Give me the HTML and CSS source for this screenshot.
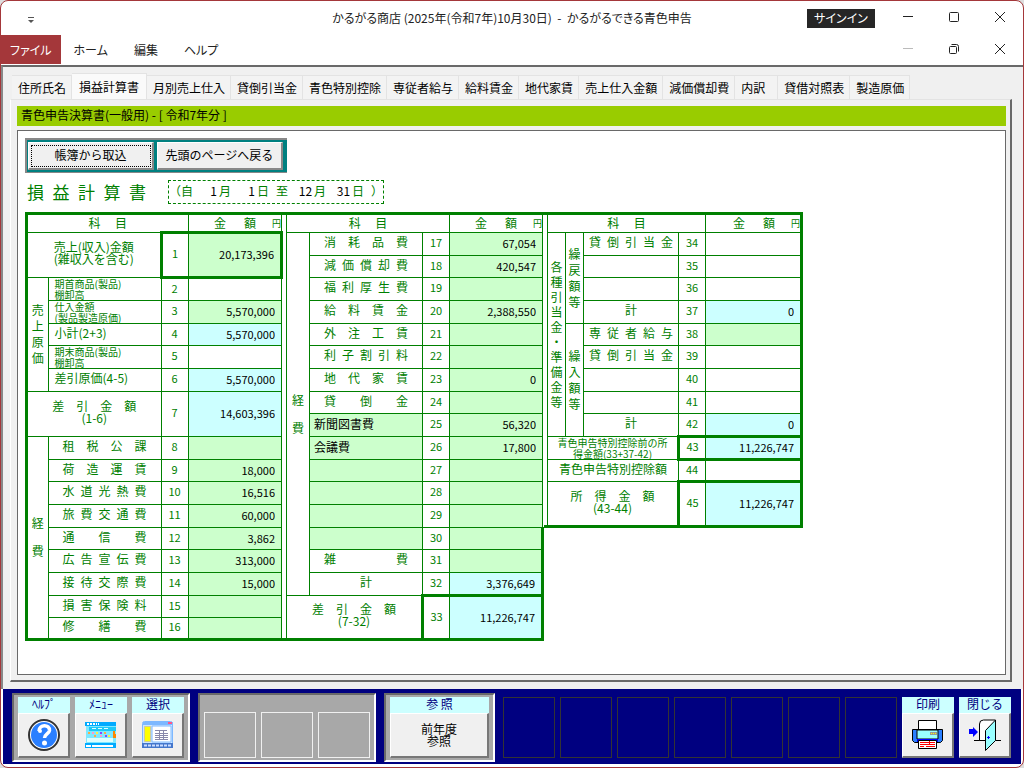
FILE: index.html
```html
<!DOCTYPE html>
<html lang="ja">
<head>
  <meta charset="UTF-8" />
  <meta name="viewport" content="width=device-width, initial-scale=1.0"/>
  <title>かるがるできる青色申告</title>
  <link rel="stylesheet" href="styles.css">
</head>
<body>
  <div class="window">
    <header class="titlebar">
      <div class="quick">
        <svg width="8" height="6" viewBox="0 0 8 6"><path d="M1 0.5h6" stroke="#555"/><path d="M1 3h6L4 6z" fill="#555"/></svg>
      </div>
      <h1>かるがる商店 (2025年(令和7年)10月30日) &nbsp;-&nbsp; かるがるできる青色申告</h1>
      <div class="controls">
        <button class="signin">サインイン</button>
        <button class="ctl"><svg width="12" height="12"><path d="M1 4.5h10" stroke="#222"/></svg></button>
        <button class="ctl"><svg width="12" height="12"><rect x="1.5" y="0.5" width="9" height="9" rx="1" fill="none" stroke="#222"/></svg></button>
        <button class="ctl"><svg width="12" height="12"><path d="M1 0l10 10M11 0L1 10" stroke="#222"/></svg></button>
      </div>
    </header>

    <nav class="menubar">
      <a class="file" href="#file">ファイル</a>
      <a href="#home">ホーム</a>
      <a href="#edit">編集</a>
      <a href="#help">ヘルプ</a>
      <div class="controls">
        <button class="ctl"><svg width="12" height="12"><path d="M1 4.5h10" stroke="#bbb"/></svg></button>
        <button class="ctl"><svg width="12" height="12"><rect x="1.5" y="2.5" width="7" height="7" rx="1" fill="none" stroke="#222"/><path d="M3.5 0.5h5a2 2 0 0 1 2 2v5" fill="none" stroke="#222"/></svg></button>
        <button class="ctl"><svg width="12" height="12"><path d="M1 0l10 10M11 0L1 10" stroke="#222"/></svg></button>
      </div>
    </nav>

    <main class="form">
      <div class="tabs">
        <button>住所氏名</button>
        <button class="active">損益計算書</button>
        <button>月別売上仕入</button>
        <button>貸倒引当金</button>
        <button>青色特別控除</button>
        <button>専従者給与</button>
        <button>給料賃金</button>
        <button>地代家賃</button>
        <button>売上仕入金額</button>
        <button>減価償却費</button>
        <button class="short">内訳</button>
        <button>貸借対照表</button>
        <button>製造原価</button>
      </div>

      <div class="page">
        <h2 class="caption">青色申告決算書(一般用) - [ 令和7年分 ]</h2>

        <section class="paper">
          <div class="actions">
            <button class="focused">帳簿から取込</button>
            <button>先頭のページへ戻る</button>
          </div>

          <div class="heading">
            <h3>損&ensp;益&ensp;計&ensp;算&ensp;書</h3>
            <div class="period">
              <span>（自</span>
              <label><input type="text" value="1">月</label>
              <label><input type="text" value="1">日</label>
              <span>至</span>
              <label><input type="text" value="12">月</label>
              <label><input type="text" value="31">日</label>
              <span>）</span>
            </div>
          </div>

          <div class="sheet">
            <div class="left">
              <!-- 売上・売上原価・経費 1-16 -->
              <table class="sales">
                <colgroup><col class="c-first"><col class="c-name"><col class="c-no"><col class="c-amt"></colgroup>
                <thead>
                  <tr><th colspan="3">科　 目</th><th><div class="yen"><span>金　&ensp;額</span><small>円</small></div></th></tr>
                </thead>
                <tbody>
                  <tr><th colspan="2" rowspan="2">売上(収入)金額<br>(雑収入を含む)</th><td class="no strong-l" rowspan="2"><label for="v1">1</label></td><td class="amt in strong-r" rowspan="2"><input id="v1" type="text" value="20,173,396"></td></tr>
                  <tr></tr>
                  <tr><th class="side" rowspan="5">売<br>上<br>原<br>価</th><th class="small">期首商品(製品)<br>棚卸高</th><td class="no"><label for="v2">2</label></td><td class="amt"><input id="v2" type="text"></td></tr>
                  <tr><th class="small">仕入金額<br>(製品製造原価)</th><td class="no"><label for="v3">3</label></td><td class="amt in"><input id="v3" type="text" value="5,570,000"></td></tr>
                  <tr><th class="start">小計(2+3)</th><td class="no"><label for="v4">4</label></td><td class="amt calc"><input id="v4" type="text" value="5,570,000" readonly></td></tr>
                  <tr><th class="small">期末商品(製品)<br>棚卸高</th><td class="no"><label for="v5">5</label></td><td class="amt"><input id="v5" type="text"></td></tr>
                  <tr><th class="start">差引原価(4-5)</th><td class="no"><label for="v6">6</label></td><td class="amt calc"><input id="v6" type="text" value="5,570,000" readonly></td></tr>
                  <tr><th colspan="2" rowspan="2">差　引　金　額<br>(1-6)</th><td class="no" rowspan="2"><label for="v7">7</label></td><td class="amt calc" rowspan="2"><input id="v7" type="text" value="14,603,396" readonly></td></tr>
                  <tr></tr>
                  <tr><th class="side wide bottom" rowspan="9">経<br><br>費</th><th>租　税　公　課</th><td class="no"><label for="v8">8</label></td><td class="amt in"><input id="v8" type="text"></td></tr>
                  <tr><th>荷　造　運　賃</th><td class="no"><label for="v9">9</label></td><td class="amt in"><input id="v9" type="text" value="18,000"></td></tr>
                  <tr><th>水&ensp;道&ensp;光&ensp;熱&ensp;費</th><td class="no"><label for="v10">10</label></td><td class="amt in"><input id="v10" type="text" value="16,516"></td></tr>
                  <tr><th>旅&ensp;費&ensp;交&ensp;通&ensp;費</th><td class="no"><label for="v11">11</label></td><td class="amt in"><input id="v11" type="text" value="60,000"></td></tr>
                  <tr><th>通　　信　　費</th><td class="no"><label for="v12">12</label></td><td class="amt in"><input id="v12" type="text" value="3,862"></td></tr>
                  <tr><th>広&ensp;告&ensp;宣&ensp;伝&ensp;費</th><td class="no"><label for="v13">13</label></td><td class="amt in"><input id="v13" type="text" value="313,000"></td></tr>
                  <tr><th>接&ensp;待&ensp;交&ensp;際&ensp;費</th><td class="no"><label for="v14">14</label></td><td class="amt in"><input id="v14" type="text" value="15,000"></td></tr>
                  <tr><th>損&ensp;害&ensp;保&ensp;険&ensp;料</th><td class="no"><label for="v15">15</label></td><td class="amt in"><input id="v15" type="text"></td></tr>
                  <tr><th class="bottom">修　　繕　　費</th><td class="no bottom"><label for="v16">16</label></td><td class="amt in bottom"><input id="v16" type="text"></td></tr>
                </tbody>
              </table>

              <!-- 経費 17-33 -->
              <table>
                <colgroup><col class="c-side"><col class="c-name"><col class="c-no"><col class="c-amt"></colgroup>
                <thead>
                  <tr><th colspan="3">科　 目</th><th><div class="yen"><span>金　&ensp;額</span><small>円</small></div></th></tr>
                </thead>
                <tbody>
                  <tr><th class="side wide" rowspan="16">経<br><br>費</th><th>消　耗　品　費</th><td class="no"><label for="v17">17</label></td><td class="amt in"><input id="v17" type="text" value="67,054"></td></tr>
                  <tr><th>減&ensp;価&ensp;償&ensp;却&ensp;費</th><td class="no"><label for="v18">18</label></td><td class="amt in"><input id="v18" type="text" value="420,547"></td></tr>
                  <tr><th>福&ensp;利&ensp;厚&ensp;生&ensp;費</th><td class="no"><label for="v19">19</label></td><td class="amt in"><input id="v19" type="text"></td></tr>
                  <tr><th>給　料　賃　金</th><td class="no"><label for="v20">20</label></td><td class="amt in"><input id="v20" type="text" value="2,388,550"></td></tr>
                  <tr><th>外　注　工　賃</th><td class="no"><label for="v21">21</label></td><td class="amt in"><input id="v21" type="text"></td></tr>
                  <tr><th>利&ensp;子&ensp;割&ensp;引&ensp;料</th><td class="no"><label for="v22">22</label></td><td class="amt in"><input id="v22" type="text"></td></tr>
                  <tr><th>地　代　家　賃</th><td class="no"><label for="v23">23</label></td><td class="amt in"><input id="v23" type="text" value="0"></td></tr>
                  <tr><th>貸　　倒　　金</th><td class="no"><label for="v24">24</label></td><td class="amt in"><input id="v24" type="text"></td></tr>
                  <tr><td class="in"><input class="name" type="text" value="新聞図書費" aria-labelledby="n25"></td><td class="no"><label id="n25" for="v25">25</label></td><td class="amt in"><input id="v25" type="text" value="56,320"></td></tr>
                  <tr><td class="in"><input class="name" type="text" value="会議費" aria-labelledby="n26"></td><td class="no"><label id="n26" for="v26">26</label></td><td class="amt in"><input id="v26" type="text" value="17,800"></td></tr>
                  <tr><td class="in"><input class="name" type="text" aria-labelledby="n27"></td><td class="no"><label id="n27" for="v27">27</label></td><td class="amt in"><input id="v27" type="text"></td></tr>
                  <tr><td class="in"><input class="name" type="text" aria-labelledby="n28"></td><td class="no"><label id="n28" for="v28">28</label></td><td class="amt in"><input id="v28" type="text"></td></tr>
                  <tr><td class="in"><input class="name" type="text" aria-labelledby="n29"></td><td class="no"><label id="n29" for="v29">29</label></td><td class="amt in"><input id="v29" type="text"></td></tr>
                  <tr><td class="in"><input class="name" type="text" aria-labelledby="n30"></td><td class="no"><label id="n30" for="v30">30</label></td><td class="amt in edge"><input id="v30" type="text"></td></tr>
                  <tr><th>雑　　　　　費</th><td class="no"><label for="v31">31</label></td><td class="amt in edge"><input id="v31" type="text"></td></tr>
                  <tr><th>計</th><td class="no"><label for="v32">32</label></td><td class="amt calc edge"><input id="v32" type="text" value="3,376,649" readonly></td></tr>
                  <tr><th class="bottom" colspan="2" rowspan="2">差　引　金　額<br>(7-32)</th><td class="no strong-l bottom" rowspan="2"><label for="v33">33</label></td><td class="amt calc strong-r bottom" rowspan="2"><input id="v33" type="text" value="11,226,747" readonly></td></tr>
                  <tr></tr>
                </tbody>
              </table>
            </div>

            <div class="right">
              <!-- 引当金・準備金・所得金額 34-45 -->
              <table class="reserve">
                <colgroup><col class="c-thin"><col class="c-thin"><col class="c-item"><col class="c-no"><col class="c-amt"></colgroup>
                <thead>
                  <tr><th colspan="4">科　 目</th><th><div class="yen"><span>金　&ensp;額</span><small>円</small></div></th></tr>
                </thead>
                <tbody>
                  <tr><th class="side tight" rowspan="9">各<br>種<br>引<br>当<br>金<br>・<br>準<br>備<br>金<br>等</th><th class="side" rowspan="4">繰<br>戻<br>額<br>等</th><th>貸&ensp;倒&ensp;引&ensp;当&ensp;金</th><td class="no"><label for="v34">34</label></td><td class="amt"><input id="v34" type="text"></td></tr>
                  <tr><td><input class="name" type="text" aria-labelledby="n35"></td><td class="no"><label id="n35" for="v35">35</label></td><td class="amt"><input id="v35" type="text"></td></tr>
                  <tr><td><input class="name" type="text" aria-labelledby="n36"></td><td class="no"><label id="n36" for="v36">36</label></td><td class="amt"><input id="v36" type="text"></td></tr>
                  <tr><th>計</th><td class="no"><label for="v37">37</label></td><td class="amt calc"><input id="v37" type="text" value="0" readonly></td></tr>
                  <tr><th class="side" rowspan="5">繰<br>入<br>額<br>等</th><th>専&ensp;従&ensp;者&ensp;給&ensp;与</th><td class="no"><label for="v38">38</label></td><td class="amt in"><input id="v38" type="text"></td></tr>
                  <tr><th>貸&ensp;倒&ensp;引&ensp;当&ensp;金</th><td class="no"><label for="v39">39</label></td><td class="amt"><input id="v39" type="text"></td></tr>
                  <tr><td><input class="name" type="text" aria-labelledby="n40"></td><td class="no"><label id="n40" for="v40">40</label></td><td class="amt"><input id="v40" type="text"></td></tr>
                  <tr><td><input class="name" type="text" aria-labelledby="n41"></td><td class="no"><label id="n41" for="v41">41</label></td><td class="amt"><input id="v41" type="text"></td></tr>
                  <tr><th>計</th><td class="no"><label for="v42">42</label></td><td class="amt calc"><input id="v42" type="text" value="0" readonly></td></tr>
                  <tr><th class="small mid" colspan="3">青色申告特別控除前の所<br>得金額(33+37-42)</th><td class="no strong-l"><label for="v43">43</label></td><td class="amt calc strong-r"><input id="v43" type="text" value="11,226,747" readonly></td></tr>
                  <tr><th colspan="3">青色申告特別控除額</th><td class="no"><label for="v44">44</label></td><td class="amt"><input id="v44" type="text"></td></tr>
                  <tr><th class="bottom" colspan="3" rowspan="2">所　得　金　額<br>(43-44)</th><td class="no strong-l bottom" rowspan="2"><label for="v45">45</label></td><td class="amt calc strong-r bottom" rowspan="2"><input id="v45" type="text" value="11,226,747" readonly></td></tr>
                  <tr></tr>
                </tbody>
              </table>
            </div>
          </div>
        </section>
      </div>
    </main>

    <footer class="dock">
      <div class="group">
        <button class="tool"><span class="cap">ﾍﾙﾌﾟ</span><span class="face">
          <svg width="32" height="32" viewBox="0 0 32 32"><circle cx="16" cy="16" r="15" fill="#fff" stroke="#333" stroke-width="2"/><circle cx="16" cy="16" r="13" fill="#2a7fff"/><path d="M11 12c0-7 11-7 10.500-.5C21 15 16.500 15 16.500 19" fill="none" stroke="#fff" stroke-width="3.500"/><circle cx="12" cy="12" r="2" fill="#fff"/><circle cx="16.500" cy="24" r="2.500" fill="#fff"/></svg>
        </span></button>
        <button class="tool"><span class="cap">ﾒﾆｭｰ</span><span class="face">
          <svg width="32" height="26" viewBox="0 0 32 26" shape-rendering="crispEdges"><path fill="#0af" d="M0 0h31v4H0z"/><path fill="#fff" d="M2 1h2v2H2zM5 1h2v2H5zM8 1h2v2H8zM11 1h1v2h-1zM13 1h1v2h-1z"/><path fill="#7de8ff" d="M1 4h30v18H1z"/><path fill="#1cc8f8" d="M4 5h27v4H4z"/><path fill="#dff" d="M2 16h26v4H2zM7 6h4v1H7zM13 6h4v1h-4zM19 6h4v1h-4z"/><path fill="#fa4" d="M3 10h2v2H3zM9 13h2v2H9zM19 10h2v2h-2z"/><path fill="#f9c" d="M7 10h2v2H7zM15 13h2v2h-2z"/><path fill="#fe4" d="M11 10h2v2h-2zM23 13h2v2h-2z"/><path fill="#84f" d="M15 10h2v2h-2zM20 13h2v2h-2z"/><path fill="#f80" d="M28 9h2v3h1v4h-3z"/><path fill="#0af" d="M0 21h31v5H0z"/><path fill="#fff" d="M1 23h5v2H1zM7 23h21v2H7z"/></svg>
        </span></button>
        <button class="tool"><span class="cap">選択</span><span class="face">
          <svg width="32" height="28" viewBox="0 0 32 28"><rect x="0.500" y="0.500" width="30" height="26" rx="2" fill="#cfe6ff" stroke="#7db8ff"/><path fill="#7db8ff" d="M1 1h30v3H1z"/><path fill="#f58" d="M26 1h4v2h-4z"/><path fill="#fff" d="M10 5h19v16H10z" stroke="#7db8ff"/><path fill="#ff0" stroke="#cc9" d="M2.500 5.500h6v15h-6z"/><path fill="none" stroke="#88a" d="M13 9.500h12M13 12.500h13M13 14.500h13M13 16.500h13M13 18.500h13M17.500 9v10M21.500 9v10"/><path fill="#47c" d="M0 22h31v5H0z"/><path stroke="#cdf" stroke-width="2" stroke-dasharray="3 1" d="M2 24.500h27"/></svg>
        </span></button>
      </div>

      <div class="group low">
        <span class="blank"></span>
        <span class="blank"></span>
        <span class="blank"></span>
      </div>

      <div class="group">
        <button class="tool big"><span class="cap">参 照</span><span class="face">前年度<br>参照</span></button>
      </div>

      <div class="slots">
        <span class="slot"></span>
        <span class="slot"></span>
        <span class="slot"></span>
        <span class="slot"></span>
        <span class="slot"></span>
        <span class="slot"></span>
        <span class="slot"></span>
        <button class="tool"><span class="cap">印刷</span><span class="face">
          <svg width="32" height="30" viewBox="0 0 32 30"><path d="M6.500.500h18v11h-18z" fill="#fff" stroke="#000"/><path d="M.500 9.500h30v11l-2 2h-26l-2-2z" fill="#2a7fff" stroke="#000"/><path d="M5 10h21v9H5z" fill="#9ff" stroke="#000"/><path d="M18 12h7v3h-7z" fill="#999"/><path d="M19 13.500h5" stroke="#ff0" stroke-dasharray="1 1"/><path d="M5 19h21v3H5z" fill="#00f"/><path d="M6.500 20.500h18v8h-18z" fill="#fff" stroke="#000"/><path d="M8 22.500h15M8 24.500h15M8 26.500h4M14 26.500h9M17.500 21v4" stroke="#f00"/></svg>
        </span></button>
        <button class="tool"><span class="cap">閉じる</span><span class="face">
          <svg width="32" height="32" viewBox="0 0 32 32"><path d="M5 21.500h27" stroke="#000"/><path d="M10.500 21.500V5q0-4 4-4h12v20.500z" fill="#fff" stroke="#000"/><path d="M16.500 11.500l10-10.500 0 20.500-10 10z" fill="#9ff" stroke="#000"/><path d="M18 18.500h3M19.500 17v3" stroke="#00f"/><path d="M0 10h4V8l5 5-5 5v-3H0z" fill="#00f"/></svg>
        </span></button>
      </div>
    </footer>
  </div>
</body>
</html>
```
FILE: styles.css
```css
* {
  box-sizing: border-box;
}
body {
  margin: 0;
  background-color: #ddd;
  color: black;
  font-family: "Noto Sans CJK JP", sans-serif;
  font-size: 12px;
  line-height: 14px;
}
button, input {
  font: inherit;
  color: inherit;
  margin: 0;
  padding: 0;
  border: none;
  background: none;
}
h1, h2, h3 {
  margin: 0;
  font-size: 12px;
  font-weight: normal;
}
.window {
  display: flex;
  flex-direction: column;
  min-height: 100vh;
  background-color: white;
  border: 1px solid #a4373a;
  border-radius: 8px;
  overflow: hidden;
}

/* title bar and menu */
.titlebar {
  display: grid;
  grid-template-columns: 1fr auto 1fr;
  align-items: center;
  height: 34px;
}
.titlebar h1 {
  font-feature-settings: "palt";
  color: #222;
}
.quick {
  padding-left: 26px;
}
.controls {
  display: flex;
  align-items: center;
  justify-content: flex-end;
  margin-left: auto;
}
.ctl {
  display: flex;
  align-items: center;
  justify-content: center;
  width: 46px;
  height: 28px;
}
.signin {
  width: 68px;
  height: 19px;
  margin-right: 10px;
  background-color: #262626;
  color: white;
  font-feature-settings: "palt";
}
.menubar {
  display: flex;
  align-items: center;
  height: 30px;
  padding-bottom: 1px;
  font-feature-settings: "palt";
}
.menubar a {
  padding: 0 13px;
  color: #222;
  line-height: 29px;
  text-decoration: none;
}
.menubar .file {
  padding: 0 9px;
  background-color: #a4373a;
  color: white;
}

/* form area */
.form {
  display: flex;
  flex-direction: column;
  flex: 1;
  padding: 6px 11px 7px 7px;
  background-color: #f0f0f0;
  border-top: 2px solid #696969;
  border-left: 2px solid #888;
}
.tabs {
  display: flex;
  align-items: flex-end;
  padding-left: 2px;
}
.tabs button {
  height: 24px;
  padding: 0 5px 0 6px;
  background-color: #f3f3f3;
  border: 1px solid #e3e3e3;
  border-left: none;
  border-bottom: none;
}
.tabs .active {
  height: 26px;
  padding: 0 7px;
  background-color: #fafafa;
}
.tabs .short {
  padding-right: 12px;
}
.page {
  display: flex;
  flex-direction: column;
  flex: 1;
  padding: 6px 4px 5px 6px;
  border: 1px solid #e3e3e3;
  border-left-color: white;
  border-right: 2px solid #696969;
  border-bottom: 2px solid #696969;
}
.caption {
  padding: 2px 4px;
  height: 20px;
  background-color: #99cc00;
}
.paper {
  flex: 1;
  margin-top: 4px;
  padding: 7px;
  background-color: white;
  border: 1px solid #696969;
}
.actions {
  display: inline-flex;
  gap: 3px;
  padding: 2px 4px 2px 1px;
  background-color: #008080;
  border: 2px solid #888;
  border-right: none;
  border-bottom-width: 1px;
}
.actions button {
  width: 126px;
  height: 28px;
  padding-bottom: 2px;
  background-color: #f0f0f0;
  border: 1px solid white;
  border-right: 2px solid #888;
  border-bottom: 2px solid #888;
}
.actions .focused {
  outline: 1px dotted black;
  outline-offset: -4px;
}
.heading {
  display: flex;
  align-items: center;
  gap: 22px;
  margin: 7px 0 5px;
  padding-left: 2px;
  color: #008000;
}
.heading h3 {
  font-size: 17px;
  line-height: 24px;
}
.period {
  display: flex;
  align-items: center;
  gap: 7px;
  width: 216px;
  height: 24px;
  padding: 0 8px 3px 0;
  border: 1px dashed #008000;
}
.period label {
  display: flex;
  align-items: center;
  gap: 2px;
}
.period input {
  width: 17px;
  text-align: right;
  color: black;
}

/* 決算書 */
.sheet {
  display: flex;
  align-items: flex-start;
  padding-top: 3px;
  color: #008000;
}
.left {
  display: flex;
  align-items: flex-start;
  gap: 3px;
  border: 3px solid #008000;
  border-right: none;
}
.right {
  padding-left: 3px;
  border: 3px solid #008000;
  border-left: none;
}
table {
  table-layout: fixed;
  width: 258px;
  border-collapse: collapse;
}
/* the frame draws the outer lines */
.sales {
  width: 255px;
  border-left: hidden;
}
.reserve {
  width: 253px;
  border-right: hidden;
}
.c-first {
  width: 20px;
}
.c-side {
  width: 23px;
}
.c-thin {
  width: 18px;
}
.c-name {
  width: 113px;
}
.c-item {
  width: 95px;
}
.c-no {
  width: 27px;
}
th, td {
  padding: 0 0 3px;
  border: 1px solid #008000;
  font-weight: normal;
  line-height: 12px;
  white-space: pre;
}
thead th {
  padding: 0;
  border-top: none;
}
thead tr {
  height: 17px;
}
tbody tr {
  height: 23px;
}
tbody tr:nth-child(3n+2) {
  height: 22px;
}
tbody tr:last-child {
  height: 21px;
}
.yen {
  display: flex;
  align-items: flex-end;
  justify-content: flex-end;
  gap: 16px;
}
.yen small {
  font-size: 9px;
  line-height: 10px;
}
.side {
  padding: 0;
  line-height: 16px;
}
.side.tight {
  line-height: 15px;
}
.side.wide {
  line-height: 14px;
}
.small {
  padding: 0 0 0 6px;
  font-size: 10px;
  line-height: 11px;
  text-align: left;
}
.small.mid {
  padding: 0;
  text-align: center;
}
.start {
  padding-left: 6px;
  text-align: left;
}
.no {
  font-size: 11px;
  text-align: center;
}
.amt {
  padding-bottom: 1px;
  font-size: 11px;
}
.in {
  background-color: #ccffcc;
}
.calc {
  background-color: #ccffff;
}
.strong-l, .strong-r {
  border-top: 3px solid #008000;
  border-bottom: 3px solid #008000;
}
.strong-l {
  border-left: 3px solid #008000;
}
.strong-r, .edge {
  border-right: 3px solid #008000;
}
.bottom {
  border-bottom: none;
}
td input {
  display: block;
  width: 100%;
  height: 14px;
  padding: 0 6px;
  color: black;
  text-align: right;
}
td .name {
  padding: 0 4px;
  text-align: left;
}

/* bottom buttons */
.dock {
  display: flex;
  gap: 8px;
  padding: 4px 10px 2px 9px;
  margin: 0 2px 3px;
  background-color: #000080;
}
.group {
  display: flex;
  gap: 5px;
  padding: 2px 4px;
  background-color: #a8a8a8;
  border: 2px solid #696969;
  border-right-color: white;
  border-bottom-color: white;
}
.slots {
  display: flex;
  gap: 5px;
  padding: 4px 0;
}
.tool {
  display: flex;
  flex-direction: column;
  width: 52px;
  height: 61px;
}
.tool.big {
  width: 99px;
}
.cap {
  height: 16px;
  align-self: stretch;
  background-color: #ccffff;
  color: #000080;
}
.face {
  display: flex;
  flex: 1;
  align-items: center;
  justify-content: center;
  align-self: stretch;
  background-color: #f0f0f0;
  border: 1px solid white;
  border-right: 2px solid #777;
  border-bottom: 2px solid #777;
  line-height: 12px;
}
.blank {
  width: 52px;
  height: 46px;
  border: 1px solid #f0f0f0;
}
.low {
  align-items: flex-end;
}
.slot {
  width: 52px;
  height: 61px;
  border: 1px solid #333;
}
```
